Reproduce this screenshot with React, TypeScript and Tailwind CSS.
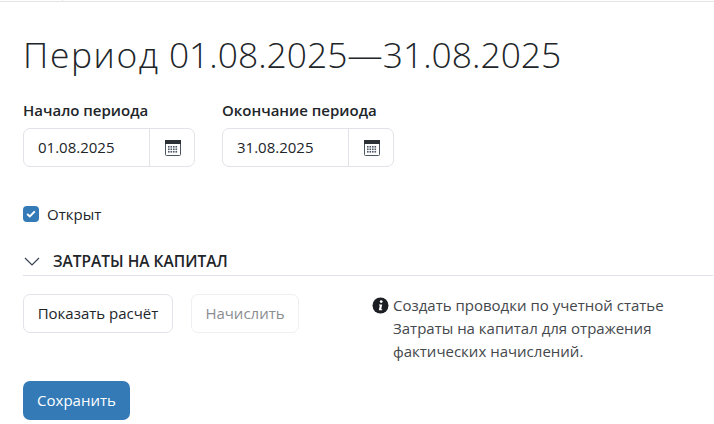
// App.tsx

function CalendarIcon() {
  return (
    <svg width="16" height="16" viewBox="0 0 16 16" className="block ml-[1px]">
      <rect x="0.5" y="0.5" width="15" height="15" rx="1" fill="#fff" stroke="#4b5563" />
      <rect x="0" y="0" width="16" height="4" fill="#2b3036" />
      {[6, 8.5, 11].map((y) =>
        [3, 5.5, 8, 10.5].map((x) => <rect key={`${x}-${y}`} x={x} y={y} width="1.6" height="1.6" fill="#4b5563" />)
      )}
    </svg>
  );
}

function DateField({ label, value }: { label: string; value: string }) {
  return (
    <div className="w-[172px]">
      <div className="text-[15px] leading-[20px] font-semibold text-[#212529] mb-[8px]">{label}</div>
      <div className="flex h-[39px] border border-[#e1e3e8] rounded-[7px] bg-white">
        <div className="w-[125px] pl-[14px] flex items-center text-[15px] text-[#212529]">{value}</div>
        <div className="flex-1 flex items-center justify-center border-l border-[#e1e3e8]">
          <CalendarIcon />
        </div>
      </div>
    </div>
  );
}

export default function App() {
  return (
    <div className="w-[714px] h-[424px] overflow-hidden bg-white text-[#212529] font-['Open_Sans','Noto_Sans',sans-serif]">
      <div className="h-[1px] pl-[62px]">
        <div className="w-[1px] h-[1px] bg-[#e5e5e5]" />
      </div>
      <div className="h-[1px] bg-[#e5e5e5]" />
      <div className="pl-[23px] pt-[28px]">
        <h1 className="text-[35.4px] leading-[48px] font-light text-[#212529]">
          <span className="tracking-[1.6px]">Период</span> 01.08.2025—31.08.2025
        </h1>

        <div className="flex gap-[27px] mt-[22px]">
          <DateField label="Начало периода" value="01.08.2025" />
          <DateField label="Окончание периода" value="31.08.2025" />
        </div>

        <label className="flex items-center gap-[8px] mt-[37px] h-[20px]">
          <span className="w-4 h-4 rounded-[4px] bg-[#337ab7] flex items-center justify-center">
            <svg width="10" height="8" viewBox="0 0 10 8" fill="none">
              <path d="M1.2 4 L3.8 6.4 L8.8 1.4" stroke="#fff" strokeWidth="2" />
            </svg>
          </span>
          <span className="text-[15px] text-[#212529]">Открыт</span>
        </label>

        <div className="flex items-center mt-[23px] h-[29px] pt-[1px] border-b border-[#e1e3e8] mr-[1px]">
          <svg width="16" height="9" viewBox="0 0 16 9" fill="none" className="ml-[1px] mr-[13px]">
            <path d="M1 1 L8 8 L15 1" stroke="#374151" strokeWidth="1.2" />
          </svg>
          <span className="text-[15.5px] font-semibold text-[#212529]">ЗАТРАТЫ НА КАПИТАЛ</span>
        </div>

        <div className="flex mt-[18px]">
          <button className="h-[39px] w-[150px] border border-[#e1e3e8] rounded-[7px] text-[15px] text-[#212529] bg-white">Показать расчёт</button>
          <button className="h-[39px] w-[108px] ml-[18px] border border-[#eeeff2] rounded-[7px] text-[15px] text-[#8a8d91] bg-white">Начислить</button>
          <div className="flex ml-[73px] w-[310px]">
            <svg width="17" height="17" viewBox="0 0 17 17" className="mt-[3px] mr-[4px] shrink-0">
              <circle cx="8.5" cy="8.5" r="8" fill="#1a1d21" />
              <circle cx="9.2" cy="4.6" r="1.4" fill="#fff" />
              <path d="M7 7.4h3.2l-1 4.9h1v1H6.8l1-4.9h-.8z" fill="#fff" />
            </svg>
            <p className="text-[15px] leading-[23px] text-[#44484c]">
              Создать проводки по учетной статье
              <br />
              Затраты на капитал для отражения
              <br />
              фактических начислений.
            </p>
          </div>
        </div>

        <button className="mt-[18px] h-[39px] w-[107px] rounded-[7px] bg-[#337ab7] text-white text-[15px]">Сохранить</button>
      </div>
    </div>
  );
}
